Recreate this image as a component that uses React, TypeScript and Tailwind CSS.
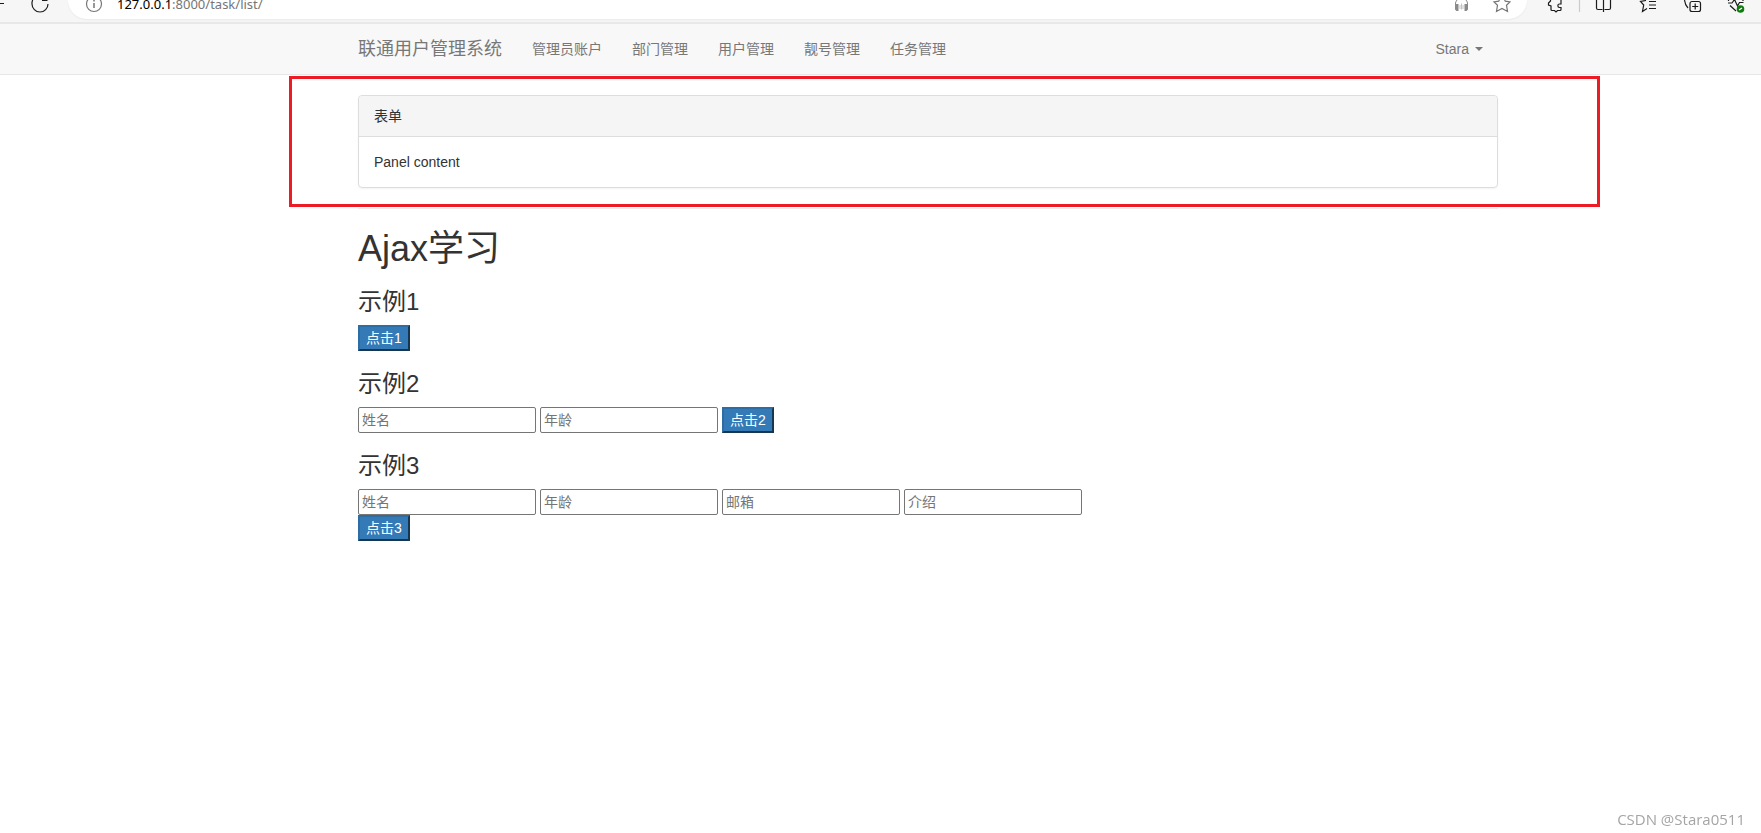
import { useState } from 'react';

const menuItems = [
    { title: '管理员账户', href: '#admin' },
    { title: '部门管理', href: '#depart' },
    { title: '用户管理', href: '#user' },
    { title: '靓号管理', href: '#pretty' },
    { title: '任务管理', href: '#task' },
];

function BrowserBar() {
    return (
        <div className="flex h-6 items-start overflow-hidden border-b-2 border-[#e8e8e8] bg-[#f6f6f6] font-['Noto_Sans',sans-serif]">
            <svg className="h-5 w-17 shrink-0" viewBox="0 0 68 20" fill="none" stroke="#1b1b1b">
                <path d="M0 3.5h4" />
                <path d="M32.7 0A7.5 7.5 0 0 0 32 4a8 8 0 0 0 16 0M42 .5h5.5" strokeWidth="1.2" />
            </svg>
            <div className="flex h-[19px] min-w-0 flex-1 items-start rounded-b-[19px] bg-white shadow-xs">
                <svg className="ml-[17px] h-4 w-5 shrink-0" viewBox="0 0 20 16" fill="none" stroke="#767676">
                    <circle cx="9" cy="4" r="7.5" strokeWidth="1.2" />
                    <path d="M9 3v5M9 0v1.5" strokeWidth="1.5" />
                </svg>
                <p className="-mt-1 ml-3 text-[13px] leading-4 text-[#767676]">
                    <span className="text-black">127.0.0.1</span>:8000/task/list/
                </p>
                <svg className="mr-4 ml-auto h-4 w-15 shrink-0" viewBox="0 0 60 16" fill="none">
                    <path d="M4.5 5V3a6 6 0 0 1 2-3.5M16.5 5V3a6 6 0 0 0-2-3.5" stroke="#8a8a8a" />
                    <path d="M4 4h3.500v7H5.500L4 9.500zM17 4h-3.500v7h2l1.500-1.500z" fill="#8a8a8a" />
                    <path d="M9 5v4M10.500 3.500v6M12 5v4" stroke="#c4c4c4" />
                    <path d="M49-1.500l-1.300 2.700-4.700.7 3.500 3.300-1 6.300L51 8.500l5.500 3-1-6.300L59 1.900l-4.700-.7L53-1.500" stroke="#767676" strokeWidth="1.200" />
                </svg>
            </div>
            <svg className="h-5 w-[234px] shrink-0" viewBox="0 0 234 20" fill="none" stroke="#1b1b1b" strokeWidth="1.200">
                <path d="M23.500 0v1l-2 2v2l2.500 1v3.500q0 1 1 1h2.500L29 12l1.500-1.500H33q1 0 1-1V7.500h-1.500c-2.200 0-2.200-3.500 0-3.500H34V0" />
                <path d="M52.500 0v12" stroke="#ccc" />
                <path d="M69.500 0v8q0 1.500 1.500 1.500h4.500M76.500 0v12M77.500 9.500H82q1.500 0 1.500-1.500V0" />
                <path d="M119 .5l-5.500 1 3.200 3.500-1.200 6.500 4.500-3M122 1.500h7M122 5h7M122 8.500h7" />
                <path d="M157.500 0q.5 5 3.500 8" />
                <rect x="163" y="1.500" width="10.500" height="10" rx="2" />
                <path d="M168.200 3.500v6M165.200 6.500h6" />
                <path d="M201 3h4l2.500-3.500L210.500 6l2-3.500h4M203 5.500l6 5.500M201.500 0v1M216 0v1" />
                <circle cx="213.500" cy="9" r="3.800" fill="#107c10" stroke="none" />
                <path d="M212 10l3-2" stroke="#fff" />
            </svg>
        </div>
    );
}

function Navbar() {
    return (
        <nav className="border-b border-[#e7e7e7] bg-[#f8f8f8] text-[#777]">
            <div className="mr-[263px] ml-[358px] flex h-[50px] items-center">
                <a href="#home" className="mr-[15px] text-lg leading-5">联通用户管理系统</a>
                <ul className="flex">
                    {menuItems.map((item) => (
                        <li key={item.href}>
                            <a href={item.href} className="block px-[15px] py-[15px] leading-5">{item.title}</a>
                        </li>
                    ))}
                </ul>
                <button type="button" className="ml-auto flex items-center gap-1.5 px-[15px] leading-5">
                    Stara
                    <span className="border-x-4 border-t-4 border-x-transparent border-t-[#777]" />
                </button>
            </div>
        </nav>
    );
}

function Field({ name, label }: { name: string; label: string }) {
    const [value, setValue] = useState('');

    return (
        <input
            type="text"
            name={name}
            aria-label={label}
            placeholder={label}
            value={value}
            onChange={(e) => setValue(e.target.value)}
            className="h-[26px] w-[178px] rounded-xs border border-[#767676] bg-white px-[3px] placeholder:text-[#757575]"
        />
    );
}

function PrimaryButton({ children }: { children: React.ReactNode }) {
    return (
        <button type="button" className="block h-[26px] w-[52px] border-2 border-t-[#2e6da4] border-r-[#17364f] border-b-[#17364f] border-l-[#2e6da4] bg-[#337ab7] leading-5 text-white">
            {children}
        </button>
    );
}

function Example({ title, children }: { title: string; children: React.ReactNode }) {
    return (
        <section className="mb-5">
            <h3 className="mb-2.5 text-2xl leading-[26px]">{title}</h3>
            {children}
        </section>
    );
}

export default function App() {
    return (
        <div className="min-h-screen bg-white font-['Liberation_Sans','Noto_Sans_CJK_SC',sans-serif] text-[14px] leading-5 text-[#333]">
            <BrowserBar />
            <Navbar />
            <div className="mt-px mr-[161px] ml-[289px] border-3 border-[#ed1c24] px-[66px] py-4">
                <div className="mr-[33px] rounded-sm border border-[#ddd] shadow-xs">
                    <div className="rounded-t-sm border-b border-[#ddd] bg-[#f5f5f5] px-[15px] py-2.5">表单</div>
                    <div className="p-[15px]">Panel content</div>
                </div>
            </div>
            <main className="mt-px mr-[263px] ml-[358px]">
                <hr className="mb-5 border-[#eee]" />
                <h1 className="mb-5 text-4xl leading-10">Ajax学习</h1>
                <Example title="示例1">
                    <PrimaryButton>点击1</PrimaryButton>
                </Example>
                <Example title="示例2">
                    <div className="flex gap-1">
                        <Field name="user" label="姓名" />
                        <Field name="age" label="年龄" />
                        <PrimaryButton>点击2</PrimaryButton>
                    </div>
                </Example>
                <Example title="示例3">
                    <form>
                        <div className="flex gap-1">
                            <Field name="user" label="姓名" />
                            <Field name="age" label="年龄" />
                            <Field name="email" label="邮箱" />
                            <Field name="more" label="介绍" />
                        </div>
                        <PrimaryButton>点击3</PrimaryButton>
                    </form>
                </Example>
            </main>
            <p className="fixed right-4 bottom-1 font-['Open_Sans',sans-serif] text-[15px] leading-5 text-[#a5a5a5]">CSDN @Stara0511</p>
        </div>
    );
}
